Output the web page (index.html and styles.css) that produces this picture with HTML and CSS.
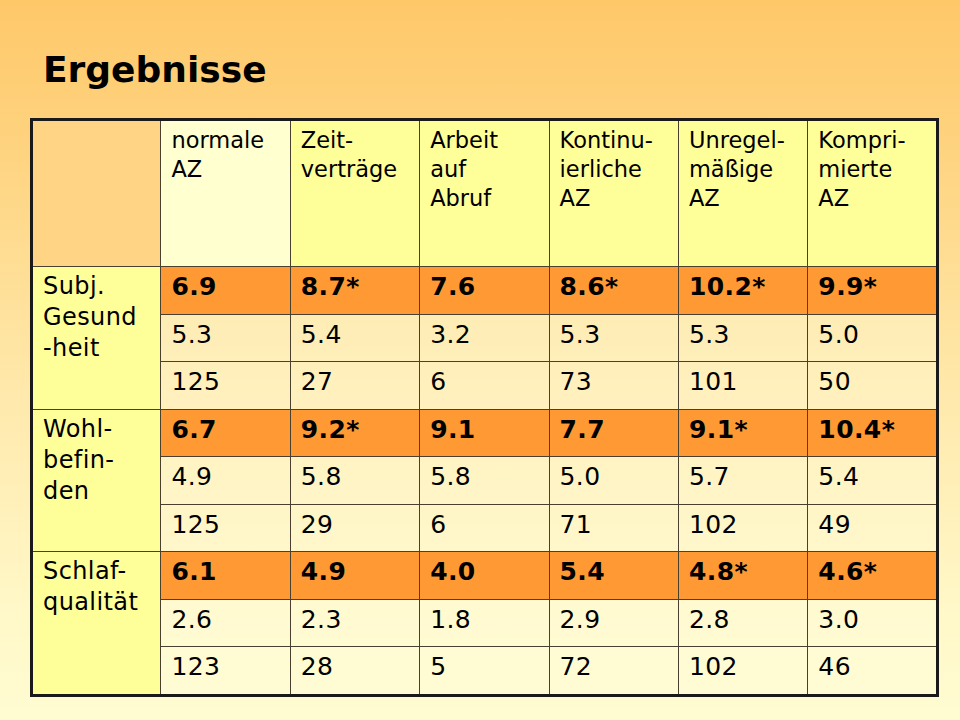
FILE: index.html
```html
<!DOCTYPE html>
<html lang="de">
<head>
<meta charset="utf-8">
<title>Ergebnisse</title>
<link rel="stylesheet" href="styles.css">
</head>
<body>
<div class="slide">
  <h1 class="title">Ergebnisse</h1>
  <table class="results">
    <colgroup>
      <col><col><col><col><col><col><col>
    </colgroup>
    <tr class="head">
      <th class="corner"></th>
      <th class="h-normal">normale<br>AZ</th>
      <th>Zeit-<br>verträge</th>
      <th>Arbeit<br>auf<br>Abruf</th>
      <th>Kontinu-<br>ierliche<br>AZ</th>
      <th>Unregel-<br>mäßige<br>AZ</th>
      <th>Kompri-<br>mierte<br>AZ</th>
    </tr>
    <tr class="mean">
      <th class="label" rowspan="3">Subj.<br>Gesund<br>-heit</th>
      <td>6.9</td><td>8.7*</td><td>7.6</td><td>8.6*</td><td>10.2*</td><td>9.9*</td>
    </tr>
    <tr class="sd">
      <td>5.3</td><td>5.4</td><td>3.2</td><td>5.3</td><td>5.3</td><td>5.0</td>
    </tr>
    <tr class="n">
      <td>125</td><td>27</td><td>6</td><td>73</td><td>101</td><td>50</td>
    </tr>
    <tr class="mean">
      <th class="label" rowspan="3">Wohl-<br>befin-<br>den</th>
      <td>6.7</td><td>9.2*</td><td>9.1</td><td>7.7</td><td>9.1*</td><td>10.4*</td>
    </tr>
    <tr class="sd">
      <td>4.9</td><td>5.8</td><td>5.8</td><td>5.0</td><td>5.7</td><td>5.4</td>
    </tr>
    <tr class="n">
      <td>125</td><td>29</td><td>6</td><td>71</td><td>102</td><td>49</td>
    </tr>
    <tr class="mean">
      <th class="label" rowspan="3">Schlaf-<br>qualität</th>
      <td>6.1</td><td>4.9</td><td>4.0</td><td>5.4</td><td>4.8*</td><td>4.6*</td>
    </tr>
    <tr class="sd">
      <td>2.6</td><td>2.3</td><td>1.8</td><td>2.9</td><td>2.8</td><td>3.0</td>
    </tr>
    <tr class="n">
      <td>123</td><td>28</td><td>5</td><td>72</td><td>102</td><td>46</td>
    </tr>
  </table>
</div>
</body>
</html>
```
FILE: styles.css
```css
html, body {
  margin: 0;
  padding: 0;
}

body {
  width: 960px;
  height: 720px;
  overflow: hidden;
  background: linear-gradient(to bottom, #fec869 0%, #fed37f 20%, #ffe9ac 55%, #fff8c8 85%, #fffcd2 100%);
  font-family: "DejaVu Sans", Verdana, sans-serif;
  color: #000;
}

.slide {
  padding: 48px 0 0 30px;
}

.title {
  margin: 0 0 0 13px;
  font-size: 36px;
  line-height: 44px;
  font-weight: bold;
}

.results {
  margin-top: 26px;
  width: 906px;
  table-layout: fixed;
  border-collapse: collapse;
  border: 3px solid #1a1a1a;
}

.results col {
  width: 129.4px;
}

.results th,
.results td {
  border: 1px solid #4a4030;
  vertical-align: top;
  text-align: left;
  padding: 4px 10px 0 10px;
  font-weight: normal;
}

.head th {
  height: 140px;
  font-size: 22.5px;
  line-height: 29px;
  padding-top: 5px;
  background: #ffff99;
}

.head .corner {
  background: #ffd585;
}

.head .h-normal {
  background: #ffffcf;
}

.label {
  background: #ffff99;
  font-size: 24px;
  line-height: 31px;
  letter-spacing: 0.4px;
}

.results td {
  height: 42.5px;
  font-size: 25px;
  line-height: 31px;
  letter-spacing: 0.4px;
}

.mean td {
  background: #ff9933;
  font-weight: bold;
}

.sd td,
.n td {
  background: rgba(255, 255, 224, 0.35);
}
```
